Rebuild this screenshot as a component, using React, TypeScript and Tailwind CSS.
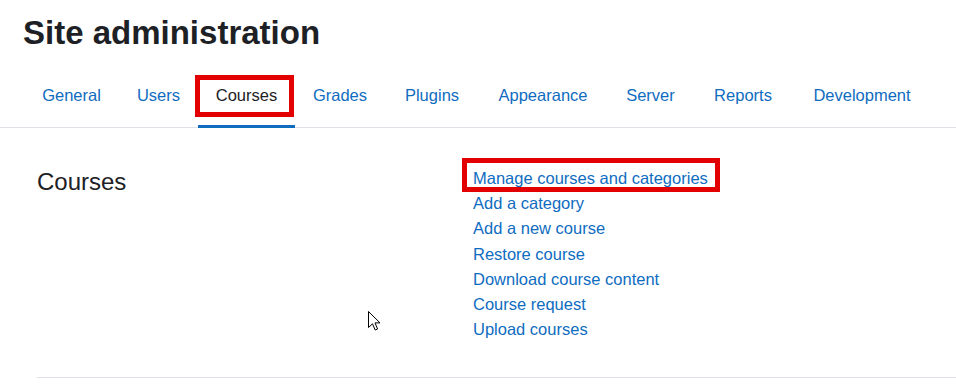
import React from 'react';

// tab widths taken from the screenshot so the labels land where they do there
const tabs = [
  { label: 'General', w: 'w-[95px]' },
  { label: 'Users', w: 'w-[79px]' },
  { label: 'Courses', w: 'w-[97px]' },
  { label: 'Grades', w: 'w-[90px]' },
  { label: 'Plugins', w: 'w-[94px]' },
  { label: 'Appearance', w: 'w-[128px]' },
  { label: 'Server', w: 'w-[87px]' },
  { label: 'Reports', w: 'w-[98px]' },
  { label: 'Development', w: 'w-[140px]' },
];

const links = [
  'Manage courses and categories',
  'Add a category',
  'Add a new course',
  'Restore course',
  'Download course content',
  'Course request',
  'Upload courses',
];

function Cursor() {
  return (
    <svg
      className="absolute left-[368px] top-[311px]"
      width="14"
      height="21"
      viewBox="0 0 14 21"
    >
      <path
        d="M0.5 0.5 L0.5 16.5 L4.5 12.8 L7.2 19 L9.6 18 L7 11.9 L12 11.9 Z"
        fill="#ffffff"
        stroke="#000000"
        strokeWidth="1"
      />
    </svg>
  );
}

export default function App() {
  return (
    <div className="relative h-[384px] w-full overflow-hidden bg-white font-['Liberation_Sans',Arial,sans-serif] text-[#1d2125]">
      <header className="px-[23px] pt-[13px]">
        <h1 className="text-[33px] font-bold leading-[40px]">
          Site administration
        </h1>
      </header>

      <nav className="mt-[14px] flex border-b border-[#dee2e6] pl-[24px]">
        {tabs.map((tab) => {
          const active = tab.label === 'Courses';
          return (
            <a
              key={tab.label}
              href="#"
              className={
                active
                  ? `relative -mb-px ${tab.w} border-b-[3px] border-[#0f6cbf] pb-[18px] pt-[16px] text-center text-[16.5px] leading-[24px] text-[#1d2125]`
                  : `relative -mb-px ${tab.w} border-b-[3px] border-transparent pb-[18px] pt-[16px] text-center text-[16.5px] leading-[24px] text-[#0f6cbf]`
              }
            >
              {tab.label}
              {active && (
                <span className="absolute bottom-[8px] left-[-3px] right-[1px] top-[8px] border-[5px] border-[#e30000]" />
              )}
            </a>
          );
        })}
      </nav>

      <section className="ml-[37px] mt-[38px] grid grid-cols-[436px_1fr] border-b border-[#dee2e6] pb-[35px]">
        <h3 className="pt-[1px] text-[24px] leading-[29px]">Courses</h3>
        <ul className="flex flex-col items-start">
          {links.map((link, i) => (
            <li key={link} className="relative text-[16.5px] leading-[25.2px]">
              <a href="#" className="text-[#0f6cbf]">
                {link}
              </a>
              {i === 0 && (
                <span className="absolute bottom-[-1px] left-[-11px] right-[-12px] top-[-8px] border-[5px] border-[#e30000]" />
              )}
            </li>
          ))}
        </ul>
      </section>

      <Cursor />
    </div>
  );
}
